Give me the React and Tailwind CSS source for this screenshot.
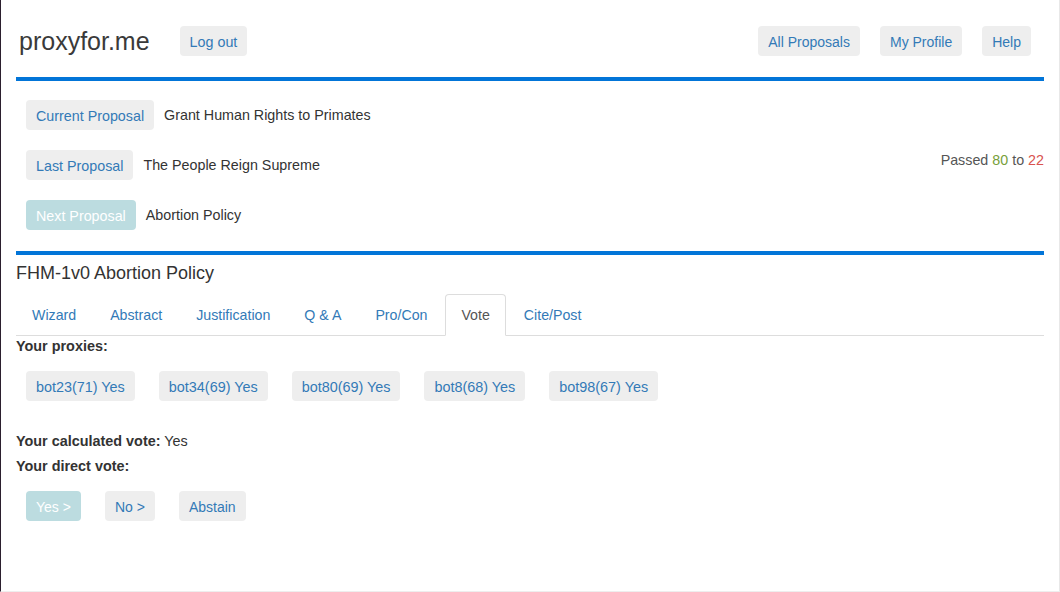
import React from 'react';

const Btn = ({ children, muted, size = 'text-[14px]' }) => (
  <span
    className={
      'inline-flex h-[30px] items-center rounded-[4px] px-[10px] pt-px leading-[20px] ' +
      size +
      ' ' +
      (muted ? 'bg-[#bcdce0] text-white' : 'bg-[#eeeeee] text-[#337ab7]')
    }
  >
    {children}
  </span>
);

const tabs = ['Wizard', 'Abstract', 'Justification', 'Q & A', 'Pro/Con', 'Vote', 'Cite/Post'];
const proxies = ['bot23(71) Yes', 'bot34(69) Yes', 'bot80(69) Yes', 'bot8(68) Yes', 'bot98(67) Yes'];

const App = () => {
  return (
    <div className="h-[592px] w-[1060px] overflow-hidden border-l border-r border-b border-l-[#2b1f2e] border-r-[#e8e8e8] border-b-[#eeeeee] bg-white font-['Liberation_Sans',Arial,sans-serif] text-[14.3px] text-[#333333]">
      <div className="px-[15px]">
        {/* header */}
        <div className="flex items-center pt-[26px] pb-[21px]">
          <span className="ml-[3px] text-[25px] leading-[30px] text-[#3a3a3a]">proxyfor.me</span>
          <span className="ml-[30px]">
            <Btn size="text-[14.3px]">Log out</Btn>
          </span>
          <div className="ml-auto mr-[13px] flex gap-[20px]">
            <Btn>All Proposals</Btn>
            <Btn>My Profile</Btn>
            <Btn>Help</Btn>
          </div>
        </div>
        <div className="h-[4px] bg-[#0275d8]" />

        {/* proposals */}
        <div className="flex flex-col gap-[20px] pt-[19px] pb-[21px] pl-[10px]">
          <div className="flex items-center gap-[10px]">
            <Btn size="text-[14.3px]">Current Proposal</Btn>
            <span className="pt-px">Grant Human Rights to Primates</span>
          </div>
          <div className="flex items-center gap-[10px]">
            <Btn size="text-[14.3px]">Last Proposal</Btn>
            <span className="pt-px">The People Reign Supreme</span>
            <span className="ml-auto -mt-[8px] text-[#555555]">
              Passed <span className="text-[#77a03a]">80</span> to{' '}
              <span className="text-[#d9534f]">22</span>
            </span>
          </div>
          <div className="flex items-center gap-[10px]">
            <Btn muted size="text-[14.3px]">Next Proposal</Btn>
            <span className="pt-px">Abortion Policy</span>
          </div>
        </div>
        <div className="h-[4px] bg-[#0275d8]" />

        {/* proposal detail */}
        <div className="pt-[8px] text-[18px] leading-[20px] text-[#333333]">FHM-1v0 Abortion Policy</div>
        <div className="mt-[11px] flex border-b border-[#dddddd] text-[14.2px]">
          {tabs.map((t) => (
            <span
              key={t}
              className={
                'mr-[2px] -mb-px rounded-t-[4px] border px-[15px] py-[10px] leading-[20px] ' +
                (t === 'Vote'
                  ? 'border-[#dddddd] border-b-white bg-white text-[#555555]'
                  : 'border-transparent text-[#337ab7]')
              }
            >
              {t}
            </span>
          ))}
        </div>

        <div className="text-[14.4px] font-bold leading-[20px]">Your proxies:</div>
        <div className="mt-[15px] flex gap-[24px] pl-[10px]">
          {proxies.map((p) => (
            <Btn key={p} size="text-[14.4px]">{p}</Btn>
          ))}
        </div>

        <div className="mt-[30px] text-[14.4px] leading-[20px]">
          <b>Your calculated vote:</b> Yes
        </div>
        <div className="mt-[5px] text-[14.4px] font-bold leading-[20px]">Your direct vote:</div>
        <div className="mt-[15px] flex gap-[24px] pl-[10px]">
          <Btn muted>Yes &gt;</Btn>
          <Btn>No &gt;</Btn>
          <Btn>Abstain</Btn>
        </div>
      </div>
    </div>
  );
};

export default App;
